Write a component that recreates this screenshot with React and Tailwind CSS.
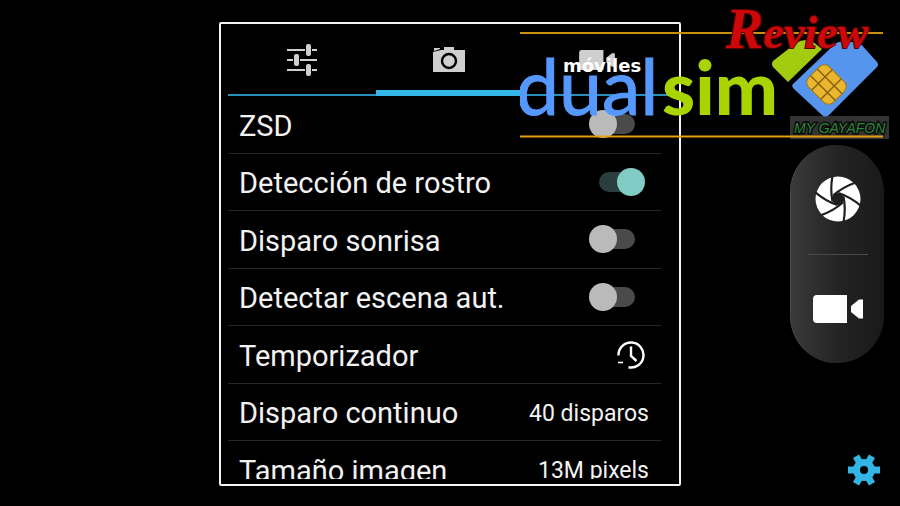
import { useState } from 'react';

const OPTIONS = [
  { id: 'zsd', label: 'ZSD', type: 'switch' },
  { id: 'face', label: 'Detección de rostro', type: 'switch' },
  { id: 'smile', label: 'Disparo sonrisa', type: 'switch' },
  { id: 'scene', label: 'Detectar escena aut.', type: 'switch' },
  { id: 'timer', label: 'Temporizador', type: 'timer' },
  { id: 'burst', label: 'Disparo continuo', type: 'value', value: '40 disparos' },
  { id: 'size', label: 'Tamaño imagen', type: 'value', value: '13M pixels' },
];

const BLADES = [0, 60, 120, 180, 240, 300];

function SlidersIcon() {
  return (
    <svg className="h-8 w-8" viewBox="0 0 32 32" fill="#cfcfcf">
      <path d="M1 5h18v2H1zM26 5h5v2h-5zM1 15h6v2H1zM14 15h17v2H14zM1 25h18v2H1zM26 25h5v2h-5z" />
      <rect x="20" y="0" width="5" height="12" rx="2" />
      <rect x="8" y="10" width="5" height="12" rx="2" />
      <rect x="20" y="20" width="5" height="12" rx="2" />
    </svg>
  );
}

function CameraIcon() {
  return (
    <svg className="h-8 w-8" viewBox="0 0 32 32">
      <path d="M0 8l8-2h3V3h10v3h11v22H0z" fill="#cfcfcf" />
      <path d="M1 4h6v1L1 7z" fill="#cfcfcf" />
      <circle cx="16" cy="17" r="7" fill="none" stroke="#000" strokeWidth="2.4" />
    </svg>
  );
}

function VideoIcon({ className, fill }) {
  return (
    <svg className={className} viewBox="0 0 50 28" fill={fill}>
      <path d="M4 0h30v28H4a4 4 0 0 1-4-4V4a4 4 0 0 1 4-4zM50 4.500v19h-4l-8-6.500v-6l8-6.500z" />
    </svg>
  );
}

function TimerIcon() {
  return (
    <svg className="h-7 w-7" viewBox="0 0 28 28" fill="none" stroke="#fff" strokeWidth="2.400">
      <path d="M1.500 14.500A12.500 12.500 0 1 1 11.500 26.300" />
      <path d="M14 5.500v9.500l5.500 5" />
      <path d="M1 21.500h5" strokeWidth="1.600" />
    </svg>
  );
}

function ShutterIcon() {
  return (
    <svg className="h-[46px] w-[46px]" viewBox="-23 -23 46 46">
      <circle r="22.500" fill="#fff" />
      <circle r="6" fill="#1f1f1f" />
      {BLADES.map((angle) => (
        <path
          key={angle}
          d="M-5.500-23Q-8-10-5.500 2.500"
          transform={`rotate(${angle})`}
          fill="none"
          stroke="#1f1f1f"
          strokeWidth="2.200"
        />
      ))}
    </svg>
  );
}

function GearIcon() {
  return (
    <svg className="h-8 w-8" viewBox="-16 -16 32 32" fill="#33b5e5">
      {BLADES.map((angle) => (
        <path key={angle} d="M8-3.500h8v7H8z" transform={`rotate(${angle})`} />
      ))}
      <circle r="7.500" fill="none" stroke="#33b5e5" strokeWidth="7" />
    </svg>
  );
}

function Logo() {
  return (
    <svg
      className="pointer-events-none absolute top-0 right-2 h-[145px] w-[372px]"
      viewBox="520 0 372 145"
      role="img"
      aria-label="móviles dualsim Review"
    >
      <rect x="790" y="116" width="99" height="23" fill="#333" />
      <path d="M520 33h363" stroke="#c9900f" strokeWidth="2" />
      <path d="M773 61l23-18q8-5 16-2l10 8-34 33-15-15q-2-3 0-6z" fill="#a3cc10" />
      <path d="M793 84l42-40q4-3 8-2h16l18 20q2 3 0 5l-48 48q-4 3-7 0l-28-26q-3-3-1-5z" fill="#5595ee" />
      <g transform="rotate(45 826.500 84.500)">
        <rect x="809" y="70" width="35" height="29" rx="7" fill="#e9b62e" stroke="#a8780f" />
        <path d="M820 70v29M833 70v29M809 80h35M809 89.500h35" stroke="#84600d" strokeWidth="1.400" />
      </g>
      <text
        x="516"
        y="115"
        fontFamily="Lato, sans-serif"
        fontSize="77"
        fill="#5599ff"
        stroke="#5599ff"
        strokeWidth="1"
      >
        dual
      </text>
      <text x="662" y="115" fontFamily="Lato, sans-serif" fontSize="75" fontWeight="900" fill="#aad400">
        sim
      </text>
      <text x="563" y="72" fontFamily="DejaVu Sans, sans-serif" fontSize="18" fontWeight="700" fill="#fff">
        móviles
      </text>
      <text
        x="726"
        y="48"
        fontFamily="Liberation Serif, serif"
        fontSize="46"
        fontStyle="italic"
        fontWeight="700"
        fill="#cc0808"
        stroke="#5a0000"
        strokeWidth="2"
        paintOrder="stroke"
      >
        <tspan fontSize="56">R</tspan>eview
      </text>
      <text
        x="794"
        y="133"
        fontFamily="Liberation Sans, sans-serif"
        fontSize="14"
        fontStyle="italic"
        fill="#2a8a3c"
        stroke="#0a0a0a"
        strokeWidth="3"
        paintOrder="stroke"
      >
        MY GAYAFON
      </text>
      <path d="M520 136.500h363" stroke="#e59f12" strokeWidth="2" />
    </svg>
  );
}

function Tab({ label, active, onClick, children }) {
  return (
    <button
      type="button"
      role="tab"
      aria-label={label}
      aria-selected={active}
      onClick={onClick}
      className={`flex items-center justify-center ${
        active ? 'border-b-6 border-[#33b5e5] pt-[5px]' : 'border-b-2 border-[#2690b8] pt-px'
      }`}
    >
      {children}
    </button>
  );
}

function OptionRow({ option, checked, onToggle }) {
  return (
    <li className="flex items-center justify-between border-b border-[#262626] pr-3 pl-[11px]">
      <label htmlFor={option.id} className="pt-1 text-[29px]">
        {option.label}
      </label>
      {option.type === 'switch' && (
        <input
          type="checkbox"
          role="switch"
          id={option.id}
          checked={checked}
          onChange={onToggle}
          className="relative mr-1 h-7 w-14 appearance-none before:absolute before:inset-x-[10px] before:inset-y-1 before:rounded-full before:bg-[#4a4a4a] after:absolute after:top-0 after:left-0 after:h-7 after:w-7 after:rounded-full after:bg-[#bababa] checked:before:bg-[#2a3f3d] checked:after:left-7 checked:after:bg-[#80cbc4]"
        />
      )}
      {option.type === 'timer' && (
        <button type="button" id={option.id} className="mr-1">
          <TimerIcon />
        </button>
      )}
      {option.type === 'value' && (
        <button type="button" id={option.id} className="pt-1 text-[23px]">
          {option.value}
        </button>
      )}
    </li>
  );
}

export default function App() {
  const [tab, setTab] = useState('camera');
  const [enabled, setEnabled] = useState({ face: true });

  const toggle = (id) => setEnabled({ ...enabled, [id]: !enabled[id] });

  return (
    <main className="relative grid h-screen grid-cols-[1fr_minmax(0,462px)_1fr] overflow-hidden bg-black pt-[22px] pb-5 font-['Roboto',sans-serif] text-[#f2f2f2]">
      <section className="col-start-2 flex min-h-0 flex-col rounded-xs border-2 border-[#f2f2f2] pr-2 pb-[5px] pl-[7px]">
        <div role="tablist" className="grid h-[72px] shrink-0 grid-cols-3">
          <Tab label="General" active={tab === 'general'} onClick={() => setTab('general')}>
            <SlidersIcon />
          </Tab>
          <Tab label="Cámara" active={tab === 'camera'} onClick={() => setTab('camera')}>
            <CameraIcon />
          </Tab>
          <Tab label="Vídeo" active={tab === 'video'} onClick={() => setTab('video')}>
            <VideoIcon className="h-5 w-9" fill="#cfcfcf" />
          </Tab>
        </div>
        <div className="min-h-0 flex-1 overflow-hidden">
          <ul className="mr-[10px] grid h-[403px] grid-rows-7">
            {OPTIONS.map((option) => (
              <OptionRow
                key={option.id}
                option={option}
                checked={!!enabled[option.id]}
                onToggle={() => toggle(option.id)}
              />
            ))}
          </ul>
        </div>
      </section>

      <aside className="grid grid-rows-[1fr_auto_1fr] justify-items-end pr-4">
        <div className="row-start-2 flex h-[218px] w-[94px] flex-col items-center rounded-full border-l border-[#4a4a4a] bg-linear-to-r from-[#3a3a3a] via-[#242424] to-[#191919]">
          <button type="button" aria-label="Foto" className="flex flex-1 items-center">
            <ShutterIcon />
          </button>
          <hr className="w-[60px] border-[#484848]" />
          <button type="button" aria-label="Grabar vídeo" className="flex flex-1 items-center">
            <VideoIcon className="h-7 w-[50px]" fill="#fff" />
          </button>
        </div>
        <button type="button" aria-label="Ajustes" className="row-start-3 mr-1 self-end">
          <GearIcon />
        </button>
      </aside>

      <Logo />
    </main>
  );
}
